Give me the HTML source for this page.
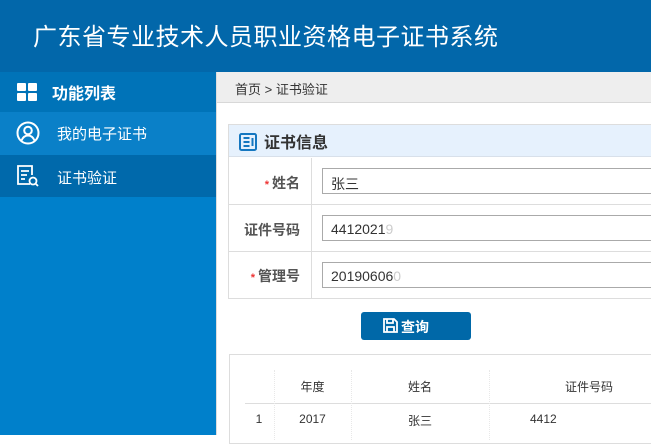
<!DOCTYPE html>
<html><head><meta charset="utf-8"><style>
*{margin:0;padding:0;box-sizing:border-box}
body{width:651px;height:435px;overflow:hidden;background:#fff;font-family:"Liberation Sans","Noto Sans CJK SC",sans-serif;position:relative}
.hd{position:absolute;left:0;top:0;width:651px;height:72px;background:#0267aa}
.hd span{position:absolute;left:33px;top:17px;font-size:24px;color:#fff;letter-spacing:0.5px}
.sb{position:absolute;left:0;top:72px;width:216px;height:363px;background:#0080cb}
.it{position:absolute;left:0;width:216px;color:#fff;font-size:15px}
.main{position:absolute;left:216px;top:72px;width:435px;height:363px;border-left:1px solid #ddd}
.bc{position:absolute;left:0;top:0;width:435px;height:31px;background:#eeeeee;border-bottom:1px solid #d8d8d8;font-size:13px;color:#333;padding:7px 0 0 18px}
.ab{position:absolute}
.inp{position:absolute;left:322px;width:340px;height:26px;border:1px solid #aaa;font-size:14px;color:#333;padding:5px 0 0 8px}
.lbl{position:absolute;width:72px;text-align:right;left:228px;font-size:14px;font-weight:bold;color:#555}
.lbl i{color:#e33;font-style:normal;font-size:11px;margin-right:3px}
.th{position:absolute;font-size:12px;color:#333;text-align:center}
</style></head><body>
<div class="hd"><span>广东省专业技术人员职业资格电子证书系统</span></div>
<div class="sb">
 <div class="it" style="top:0;height:40px;background:#0073b8">
  <svg class="ab" style="left:17px;top:11px" width="21" height="19"><rect x="0" y="0" width="9" height="8" rx="1" fill="#fff"/><rect x="11" y="0" width="9" height="8" rx="1" fill="#fff"/><rect x="0" y="10" width="9" height="8" rx="1" fill="#fff"/><rect x="11" y="10" width="9" height="8" rx="1" fill="#fff"/></svg>
  <span class="ab" style="left:52px;top:8px;font-weight:bold;font-size:16px">功能列表</span></div>
 <div class="it" style="top:40px;height:43px;background:#0a80c8">
  <svg class="ab" style="left:16px;top:9px" width="24" height="24" fill="none" stroke="#fff" stroke-width="2"><circle cx="12" cy="12" r="10.5"/><circle cx="12" cy="9.5" r="3.8"/><path d="M5.5 19.5c1.5-3.5 4-5 6.5-5s5 1.5 6.5 5"/></svg>
  <span class="ab" style="left:57px;top:11px">我的电子证书</span></div>
 <div class="it" style="top:83px;height:42px;background:#0069ab">
  <svg class="ab" style="left:16px;top:10px" width="24" height="22" fill="none" stroke="#fff" stroke-width="1.8"><path d="M14 19H2V1h14v9"/><path d="M5 6h8M5 10h6M5 14h4"/><circle cx="17" cy="16" r="3.5"/><path d="M19.5 18.5l2.5 2.5"/></svg>
  <span class="ab" style="left:57px;top:12px">证书验证</span></div>
</div>
<div class="main"><div class="bc">首页 &gt; 证书验证</div></div>
<div class="ab" style="left:228px;top:124px;width:430px;height:175px;border:1px solid #ddd"></div>
<div class="ab" style="left:229px;top:125px;width:430px;height:32px;background:#e6f1fd;border-bottom:1px solid #d8e0ea"></div>
<svg class="ab" style="left:239px;top:133px" width="18" height="18" fill="none" stroke="#1577c0" stroke-width="2"><rect x="1" y="1" width="16" height="16" rx="1.5"/><path d="M4.5 5h6M4.5 9h6M4.5 13h6M13.5 5v8"/></svg>
<div class="ab" style="left:264px;top:129px;font-size:16px;font-weight:bold;color:#333">证书信息</div>
<div class="ab" style="left:311px;top:158px;width:1px;height:140px;background:#ddd"></div>
<div class="ab" style="left:229px;top:204px;width:430px;height:1px;background:#ddd"></div>
<div class="ab" style="left:229px;top:251px;width:430px;height:1px;background:#ddd"></div>
<div class="lbl" style="top:173px"><i>*</i>姓名</div>
<div class="lbl" style="top:220px">证件号码</div>
<div class="lbl" style="top:266px"><i>*</i>管理号</div>
<div class="inp" style="top:168px">张三</div>
<div class="inp" style="top:215px">4412021<span style="color:#ccc">9</span></div>
<div class="inp" style="top:262px">20190606<span style="color:#ccc">0</span></div>
<div class="ab" style="left:361px;top:312px;width:110px;height:28px;background:#0068a8;border-radius:3px"></div>
<svg class="ab" style="left:383px;top:318px" width="15" height="15" fill="none" stroke="#fff" stroke-width="1.8"><path d="M1 1h10l3 3v10H1z"/><path d="M4 1v4h6V1M4 14V9h7v5"/></svg>
<div class="ab" style="left:401px;top:317px;font-size:14px;font-weight:bold;color:#fff">查询</div>
<div class="ab" style="left:229px;top:354px;width:430px;height:90px;border:1px solid #ddd;border-right:none"></div>
<div class="ab" style="left:245px;top:403px;width:410px;height:1px;background:#ddd"></div>
<div class="ab" style="left:274px;top:370px;width:0;height:70px;border-left:1px dotted #e8e8e8"></div>
<div class="ab" style="left:351px;top:370px;width:0;height:70px;border-left:1px dotted #e8e8e8"></div>
<div class="ab" style="left:489px;top:370px;width:0;height:70px;border-left:1px dotted #e8e8e8"></div>
<div class="th" style="left:274px;top:378px;width:77px">年度</div>
<div class="th" style="left:351px;top:378px;width:138px">姓名</div>
<div class="th" style="left:489px;top:378px;width:200px">证件号码</div>
<div class="th" style="left:252px;top:412px;width:14px">1</div>
<div class="th" style="left:274px;top:412px;width:77px">2017</div>
<div class="th" style="left:351px;top:412px;width:138px">张三</div>
<div class="th" style="left:530px;top:412px;text-align:left">4412</div>
</body></html>
